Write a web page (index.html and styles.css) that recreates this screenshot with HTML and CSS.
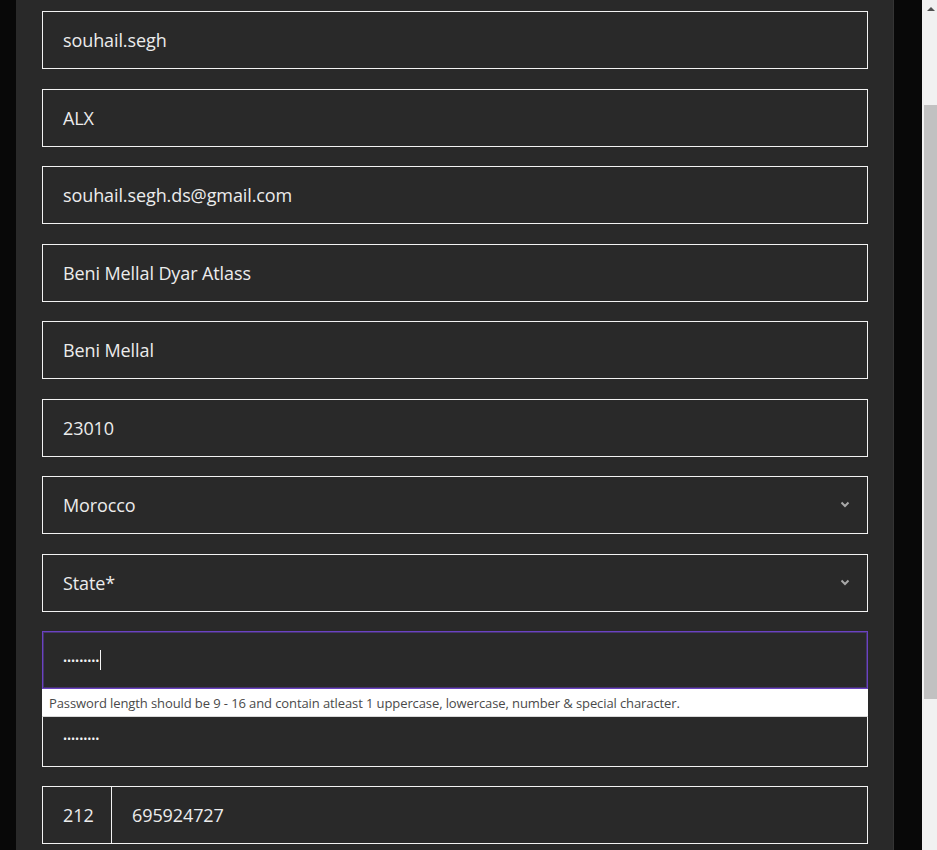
FILE: index.html
```html
<!DOCTYPE html>
<html lang="en">
<head>
<meta charset="utf-8">
<title>Register</title>
<link rel="stylesheet" href="styles.css">
</head>
<body>
<div class="viewport">
  <main class="panel">
    <form class="form">
      <div class="field"><span class="value">souhail.segh</span></div>
      <div class="field"><span class="value">ALX</span></div>
      <div class="field"><span class="value">souhail.segh.ds@gmail.com</span></div>
      <div class="field"><span class="value">Beni Mellal Dyar Atlass</span></div>
      <div class="field"><span class="value">Beni Mellal</span></div>
      <div class="field"><span class="value">23010</span></div>
      <div class="field select"><span class="value">Morocco</span>
        <svg class="chev" width="10" height="7" viewBox="0 0 10 7"><path d="M1.5 1.5 L5 5 L8.5 1.5" fill="none" stroke="#a8a8a8" stroke-width="2"/></svg>
      </div>
      <div class="field select"><span class="value">State*</span>
        <svg class="chev" width="10" height="7" viewBox="0 0 10 7"><path d="M1.5 1.5 L5 5 L8.5 1.5" fill="none" stroke="#a8a8a8" stroke-width="2"/></svg>
      </div>
      <div class="pw-wrap">
        <div class="field focused"><span class="dots">•••••••••</span><span class="caret"></span></div>
        <div class="hint">Password length should be 9 - 16 and contain atleast 1 uppercase, lowercase, number &amp; special character.</div>
      </div>
      <div class="field"><span class="dots">•••••••••</span></div>
      <div class="phone">
        <div class="code"><span class="value">212</span></div>
        <div class="num"><span class="value">695924727</span></div>
      </div>
    </form>
  </main>
</div>
<div class="scrollbar">
  <div class="arrow"></div>
  <div class="track">
    <div class="thumb"></div>
  </div>
</div>
</body>
</html>
```
FILE: styles.css
```css
html, body {
  margin: 0;
  padding: 0;
  height: 850px;
  overflow: hidden;
}
body {
  display: flex;
  background: #080808;
  font-family: "Open Sans", "Liberation Sans", sans-serif;
}
.viewport {
  flex: 1;
  display: flex;
  padding-left: 16px;
  overflow: hidden;
}
.panel {
  width: 877px;
  border-right: 1px solid #343434;
  background: #292929;
  box-sizing: content-box;
}
.form {
  display: flex;
  flex-direction: column;
  gap: 19.5px;
  padding: 11px 0 0 26px;
}
.field {
  width: 826px;
  height: 58px;
  box-sizing: border-box;
  border: 1px solid #f2f2f2;
  display: flex;
  align-items: center;
  padding: 0 20px;
  background: #292929;
}
.value {
  color: #ececec;
  font-size: 18px;
  letter-spacing: -0.1px;
}
.select {
  justify-content: space-between;
  padding-right: 17px;
}
.chev {
  display: block;
  margin-top: -1px;
}
.pw-wrap {
  position: relative;
}
.field.focused {
  border: 1px solid #6a42c2;
  box-shadow: inset 0 0 0 1px rgba(106, 66, 194, 0.45);
}
.dots {
  color: #f4f4f4;
  font-size: 11px;
  letter-spacing: -0.1px;
  margin-top: 1px;
}
.caret {
  display: block;
  width: 1px;
  height: 20px;
  background: #f4f4f4;
  margin-left: 1px;
}
.hint {
  position: absolute;
  left: 0;
  top: 100%;
  width: 826px;
  height: 28px;
  box-sizing: border-box;
  background: #ffffff;
  border-bottom: 1px solid #d8d8d8;
  color: #4a4a4a;
  font-size: 13px;
  line-height: 28px;
  padding-left: 7px;
  z-index: 2;
  white-space: nowrap;
  letter-spacing: -0.1px;
}
.phone {
  display: flex;
  width: 826px;
  height: 58px;
}
.code, .num {
  box-sizing: border-box;
  border: 1px solid #f2f2f2;
  display: flex;
  align-items: center;
  padding: 0 20px;
}
.code {
  width: 70px;
}
.num {
  flex: 1;
  border-left: 0;
}
.scrollbar {
  width: 15px;
  background: #f1f1f1;
  display: flex;
  flex-direction: column;
}
.arrow {
  height: 17px;
  display: flex;
  justify-content: center;
  align-items: center;
  padding-left: 2px;
}
.arrow::before {
  content: "";
  width: 0;
  height: 0;
  border-left: 4px solid transparent;
  border-right: 4px solid transparent;
  border-bottom: 4px solid #505050;
}
.track {
  flex: 1;
  padding: 88px 0 0 2px;
}
.thumb {
  height: 594px;
  background: #c1c1c1;
}
```
